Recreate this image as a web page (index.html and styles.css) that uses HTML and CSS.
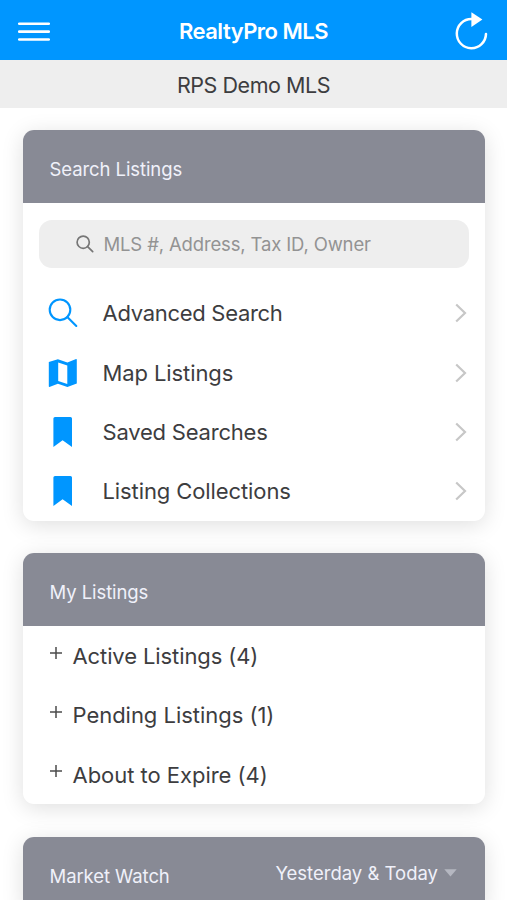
FILE: index.html
```html
<!DOCTYPE html>
<html lang="en">
<head>
<meta charset="utf-8">
<title>RealtyPro MLS</title>
<link rel="stylesheet" href="styles.css">
</head>
<body>
<header class="navbar">
  <svg class="menu" width="32" height="20" viewBox="0 0 32 20"><path d="M1.2 1.7H30.8M1.2 9.6H30.8M1.2 17.5H30.8"/></svg>
  <h1 class="title">RealtyPro MLS</h1>
  <svg class="refresh" width="34" height="40" viewBox="0 0 34 40"><path class="ring" d="M16.6 8A14.6 14.6 0 1 0 31 22.9"/><path class="tip" d="M16.4 1.3L27.4 8.6 16.4 16Z"/></svg>
</header>
<div class="subbar"><span>RPS Demo MLS</span></div>
<main class="cards">
  <section class="card">
    <div class="card-head"><h2>Search Listings</h2></div>
    <div class="search">
      <svg width="18" height="18" viewBox="0 0 18 18"><circle cx="7.2" cy="7.2" r="6.1"/><path d="M11.6 11.6L16.7 16.7"/></svg>
      <span>MLS #, Address, Tax ID, Owner</span>
    </div>
    <ul class="rows">
      <li class="row">
        <svg class="icon line" width="30" height="30" viewBox="0 0 30 30"><circle cx="12" cy="11.8" r="10.3"/><path d="M19.3 19.1L28.3 28"/></svg>
        <span class="label advanced">Advanced Search</span>
        <svg class="chevron" width="12" height="20" viewBox="0 0 12 20"><path d="M1.2 1.5L10 10 1.2 18.5"/></svg>
      </li>
      <li class="row">
        <svg class="icon" width="30" height="30" viewBox="0 0 30 30"><path fill-rule="evenodd" d="M.8 4.1L9.9 1.2 19.4 4.4 28.1 1.1Q28.8 1 28.8 1.8V25.6L19.4 28.9 9.9 25.7 1.4 28.9Q.8 29 .8 28.2ZM10.2 4.5V22.9L19.3 26V7.6Z"/></svg>
        <span class="label">Map Listings</span>
        <svg class="chevron" width="12" height="20" viewBox="0 0 12 20"><path d="M1.2 1.5L10 10 1.2 18.5"/></svg>
      </li>
      <li class="row">
        <svg class="icon" width="30" height="30" viewBox="0 0 30 30"><path d="M7 0H22.5Q24 0 24 1.5V30L14.6 23.2 5.4 30V1.5Q5.4 0 7 0Z"/></svg>
        <span class="label saved">Saved Searches</span>
        <svg class="chevron" width="12" height="20" viewBox="0 0 12 20"><path d="M1.2 1.5L10 10 1.2 18.5"/></svg>
      </li>
      <li class="row">
        <svg class="icon" width="30" height="30" viewBox="0 0 30 30"><path d="M7 0H22.5Q24 0 24 1.5V30L14.6 23.2 5.4 30V1.5Q5.4 0 7 0Z"/></svg>
        <span class="label">Listing Collections</span>
        <svg class="chevron" width="12" height="20" viewBox="0 0 12 20"><path d="M1.2 1.5L10 10 1.2 18.5"/></svg>
      </li>
    </ul>
  </section>
  <section class="card">
    <div class="card-head"><h2>My Listings</h2></div>
    <ul class="rows flush">
      <li class="row"><svg class="plus" width="12" height="12" viewBox="0 0 12 12"><path d="M6 0V12M0 6H12"/></svg><span class="label">Active Listings (4)</span></li>
      <li class="row"><svg class="plus" width="12" height="12" viewBox="0 0 12 12"><path d="M6 0V12M0 6H12"/></svg><span class="label pending">Pending Listings (1)</span></li>
      <li class="row"><svg class="plus" width="12" height="12" viewBox="0 0 12 12"><path d="M6 0V12M0 6H12"/></svg><span class="label pending">About to Expire (4)</span></li>
    </ul>
  </section>
  <section class="card">
    <div class="card-head">
      <h2>Market Watch</h2>
      <div class="period"><span>Yesterday &amp; Today</span><svg width="13" height="8" viewBox="0 0 13 8"><path d="M.3 .3H12.7L6.5 7.4Z"/></svg></div>
    </div>
  </section>
</main>
</body>
</html>
```
FILE: styles.css
```css
* { box-sizing: border-box; }
html { overflow: hidden; }
body {
  margin: 0;
  height: 900px;
  overflow: hidden;
  background: #fff;
  color: #3d3d3f;
  font-family: Inter, "Liberation Sans", sans-serif;
  white-space: nowrap;
}
svg { display: block; flex: none; }
h1, h2, ul { margin: 0; padding: 0; font-weight: 400; }
.navbar {
  height: 60.4px;
  padding: 0 18px;
  display: grid;
  grid-template-columns: 34px 1fr 34px;
  align-items: center;
  background: #0096ff;
}
.menu { fill: none; stroke: #fff; stroke-width: 2.6; stroke-linecap: round; margin-top: 3.4px; }
.title {
  padding-top: 1px;
  color: #fff;
  font-size: 22px;
  font-weight: 600;
  line-height: 28px;
  text-align: center;
  letter-spacing: -0.5px;
}
.refresh { margin-top: 2px; }
.ring { fill: none; stroke: #fff; stroke-width: 2.5; stroke-linecap: round; }
.tip { fill: #fff; }
.subbar {
  height: 48px;
  padding-top: 1.5px;
  display: flex;
  align-items: center;
  justify-content: center;
  background: #eee;
  font-size: 21.5px;
  letter-spacing: -0.45px;
}
.cards { display: flex; flex-direction: column; gap: 32.3px; padding: 21.8px 22px 0 22.5px; }
.card { border-radius: 11px; background: #fff; box-shadow: 0 4px 22px rgba(0, 0, 0, 0.13); }
.card-head {
  height: 73px;
  padding: 5px 28px 0 27px;
  display: flex;
  align-items: center;
  justify-content: space-between;
  border-radius: 11px 11px 0 0;
  background: #888a95;
  color: #f0f1fa;
}
.card-head h2 { font-size: 18.5px; line-height: 24px; letter-spacing: -0.08px; }
.search {
  height: 48.5px;
  margin: 16.5px 16px 0;
  padding-left: 37px;
  display: flex;
  align-items: center;
  gap: 10px;
  border-radius: 13px;
  background: #eee;
  color: #939393;
  font-size: 18.5px;
  letter-spacing: -0.15px;
}
.search svg { fill: none; stroke: #767676; stroke-width: 1.7; stroke-linecap: round; }
.rows { list-style: none; padding-top: 15.5px; }
.rows.flush { padding-top: 0; }
.row { height: 59.35px; padding: 0 18px 0 25px; display: flex; align-items: center; }
.icon { fill: #0096ff; margin-right: 25px; }
.icon.line { fill: none; stroke: #0096ff; stroke-width: 2.1; stroke-linecap: round; }
.label { font-size: 22px; line-height: 28px; letter-spacing: -0.1px; }
.advanced { letter-spacing: -0.29px; }
.saved { letter-spacing: -0.21px; }
.pending { letter-spacing: -0.03px; }
.chevron { margin-left: auto; fill: none; stroke: #c7c7c7; stroke-width: 2.2; }
.plus { margin: -7px 11px 0 2px; fill: none; stroke: #4c4c4c; stroke-width: 1.5; }
.period { display: flex; align-items: center; gap: 6px; margin-top: -6px; font-size: 18.5px; }
.period svg { fill: #b5b7c1; }
```
